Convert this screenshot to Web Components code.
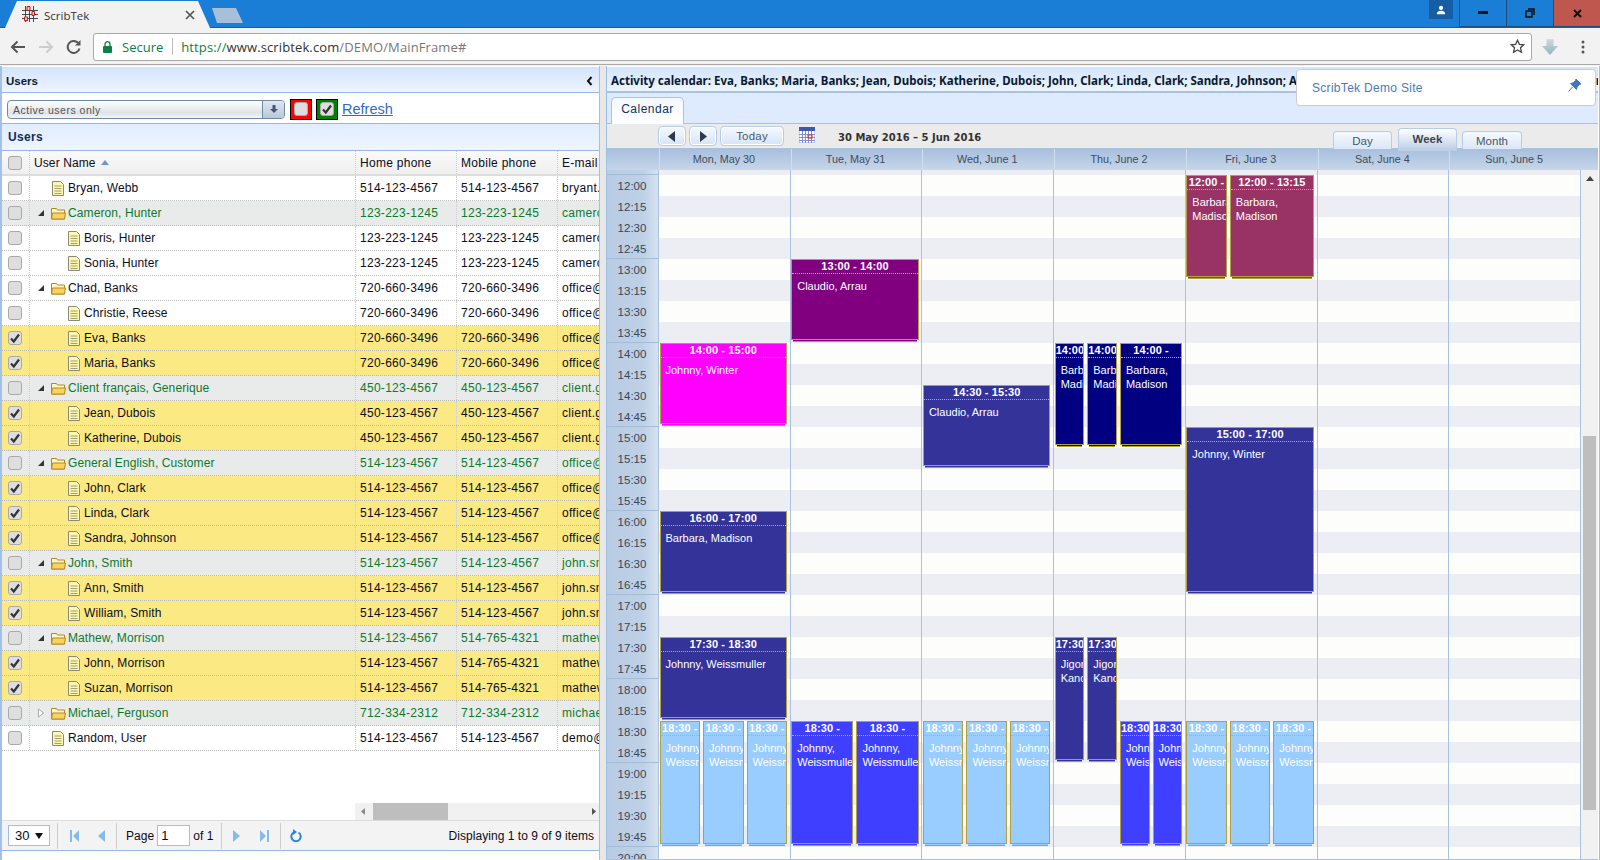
<!DOCTYPE html>
<html lang="en">
<head>
<meta charset="utf-8">
<title>ScribTek</title>
<style>
  html, body { margin: 0; height: 100%; overflow: hidden; background: #fff; }
  body { font: 12px "Liberation Sans", Arial, sans-serif; display: flex; flex-direction: column; height: 860px; }
</style>
</head>
<body>
  <browser-chrome></browser-chrome>
  <main-view>
    <users-panel></users-panel>
    <calendar-panel></calendar-panel>
  </main-view>
  <site-popup>ScribTek Demo Site</site-popup>

<script>
// Small base class: open shadow root, render on connect
class Base extends HTMLElement {
  constructor() {
    super();
    this.attachShadow({ mode: 'open' });
  }
  connectedCallback() {
    this.render();
  }
}

// Browser tab strip and address bar
class BrowserChrome extends Base {
  render() {
    this.shadowRoot.innerHTML = `
      <style>
        :host { display: block; height: 66px; flex: none; background: #f2f2f2; }
        .top { height: 28px; background: #1a7ed6; display: flex; align-items: flex-start; box-sizing: border-box; border-bottom: 1px solid #14609f; }
        .tab { width: 206px; height: 28px; margin-left: 5px; flex: none; background: #f2f2f2; display: flex; align-items: center;
               clip-path: polygon(0 100%, 12px 4%, 193px 4%, 205px 100%); font: 11.5px "Open Sans", sans-serif; color: #333; box-sizing: border-box; padding: 2px 0 0 17px; }
        .tab svg.fav { margin-right: 6px; margin-top: -2px; }
        .tab .x { margin-left: auto; margin-right: 16px; }
        .tab2 { width: 32px; height: 15px; margin: 8px 0 0 1px; background: #a7bfd8; clip-path: polygon(5px 100%, 0 0, 24px 0, 31px 100%); }
        .win { margin-left: auto; display: flex; }
        .user { width: 24px; height: 19px; background: #155ea3; margin-right: 6px; display: flex; align-items: center; justify-content: center; }
        .btn { width: 47px; height: 27px; box-sizing: border-box; border-left: 1px solid #1d4d7a; border-bottom: 1px solid #1d4d7a; display: flex; align-items: center; justify-content: center; }
        .close { background: #c0574f; }
        .bar { height: 37px; display: flex; align-items: center; box-sizing: border-box; padding: 1px 0 0 4px; border-bottom: 1px solid #a9a9a9; }
        .ico { width: 28px; display: flex; justify-content: center; }
        .omni { width: 1439px; height: 28px; margin-left: 5px; box-sizing: border-box; background: #fff; border: 1px solid #a9a9a9; border-radius: 3px;
                display: flex; align-items: center; font: 13px "Open Sans", sans-serif; color: #777; }
        .omni .lock { margin-left: 9px; }
        .sec { color: #0b8043; margin-left: 10px; }
        .div { width: 1px; height: 17px; background: #bbb; margin: 0 8px 0 9px; }
        .url { letter-spacing: .12px; }
        .url b { font-weight: 400; color: #333; }
        .url i { font-style: normal; color: #0b8043; }
        .star { margin-left: auto; margin-right: 6px; }
        .dl { margin-left: 10px; }
        .dots { margin-left: 23px; }
      </style>
      <div class="top">
        <div class="tab">
          <svg class="fav" width="16" height="16" viewBox="0 0 16 16">
            <path d="M0 4.5h16M0 8.5h16M0 12.5h16M3.500 0v16M7.500 0v16M11.500 0v16" stroke="#3f4a4a" fill="none"/>
            <path d="M5 .5h3v4H5zM10 5.500h2.500v4H10zM2.500 11h3v3.500h-3z" fill="#f7c9c9" stroke="#d8121a"/>
          </svg>
          ScribTek
          <svg class="x" width="10" height="10" viewBox="0 0 10 10"><path d="M1 1l8 8M9 1l-8 8" stroke="#555" stroke-width="1.700"/></svg>
        </div>
        <div class="tab2"></div>
        <div class="win">
          <div class="user"><svg width="10" height="10" viewBox="0 0 12 12"><circle cx="6" cy="3.500" r="2.500" fill="#fff"/><path d="M1 11c0-3 2-4 5-4s5 1 5 4z" fill="#fff"/></svg></div>
          <div class="btn"><svg width="10" height="4" viewBox="0 0 10 4"><rect width="10" height="3" fill="#111"/></svg></div>
          <div class="btn"><svg width="10" height="10" viewBox="0 0 10 10"><path d="M3 1h6v6M1 3h6v6H1z" fill="none" stroke="#111" stroke-width="1.500"/></svg></div>
          <div class="btn close"><svg width="9" height="9" viewBox="0 0 9 9"><path d="M1 1l7 7M8 1l-7 7" stroke="#111" stroke-width="2"/></svg></div>
        </div>
      </div>
      <div class="bar">
        <div class="ico"><svg width="16" height="14" viewBox="0 0 16 14"><path d="M15 7H2M7.500 1.500L2 7l5.500 5.500" fill="none" stroke="#555" stroke-width="2"/></svg></div>
        <div class="ico"><svg width="16" height="14" viewBox="0 0 16 14"><path d="M1 7h13M8.500 1.500L14 7l-5.500 5.500" fill="none" stroke="#ccc" stroke-width="2"/></svg></div>
        <div class="ico"><svg width="16" height="16" viewBox="0 0 16 16"><path d="M13.500 9.500A6 6 0 1 1 12 3.800" fill="none" stroke="#555" stroke-width="2"/><path d="M14.500 1v5.500H9z" fill="#555"/></svg></div>
        <div class="omni">
          <svg class="lock" width="9" height="12" viewBox="0 0 9 12"><path d="M2 5V3.200a2.500 2.500 0 0 1 5 0V5" fill="none" stroke="#0b8043" stroke-width="1.300"/><rect y="5" width="9" height="7" rx="1" fill="#0b8043"/></svg>
          <span class="sec">Secure</span><span class="div"></span>
          <span class="url"><i>https://</i><b>www.scribtek.com</b>/DEMO/MainFrame#</span>
          <svg class="star" width="15" height="15" viewBox="0 0 15 15"><path d="M7.500 1.300l1.900 4 4.300.5-3.200 3 .9 4.400-3.900-2.200-3.900 2.200.9-4.400-3.200-3 4.300-.5z" fill="none" stroke="#444" stroke-width="1.300"/></svg>
        </div>
        <svg class="dl" width="16" height="16" viewBox="0 0 16 16"><defs><linearGradient id="g" x1="0" y1="0" x2="0" y2="1"><stop offset="0" stop-color="#d5d9db"/><stop offset="1" stop-color="#8fb4bf"/></linearGradient></defs><path d="M4.500 0h7v7H16l-8 9-8-9h4.500z" fill="url(#g)"/></svg>
        <svg class="dots" width="4" height="14" viewBox="0 0 4 14"><circle cx="2" cy="2" r="1.500" fill="#555"/><circle cx="2" cy="7" r="1.500" fill="#555"/><circle cx="2" cy="12" r="1.500" fill="#555"/></svg>
      </div>`;
  }
}

// Row of panels under the browser bars
class MainView extends Base {
  render() {
    this.shadowRoot.innerHTML = `
      <style>
        :host { display: flex; flex: 1; min-height: 0; background: #e8e8e8; }
      </style>
      <slot></slot>`;
  }
}

// Grey rounded tick box used in grid rows
class CheckBox extends Base {
  render() {
    const tick = this.hasAttribute('checked')
      ? '<path d="M3 7.500l2.800 3L11 3.500" fill="none" stroke="#333" stroke-width="2.200"/>' : '';
    this.shadowRoot.innerHTML = `
      <style>:host { display: inline-flex; width: 14px; height: 14px; flex: none; }</style>
      <svg width="14" height="14" viewBox="0 0 14 14">
        <rect x=".5" y=".5" width="13" height="13" rx="2.500" fill="#dedede" stroke="#a9a9a9"/>${tick}
      </svg>`;
  }
}

// One row of the users tree grid
class UserRow extends Base {
  render() {
    const kind = this.getAttribute('kind') || 'leaf';
    const level = this.getAttribute('level') || '0';
    const checked = this.hasAttribute('checked');
    const group = kind !== 'leaf';
    const page = `<svg width="12" height="15" viewBox="0 0 12 15"><path d="M.5.500h8l3 3v11H.5z" fill="#fff7b0" stroke="#8a8a78"/><path d="M2.500 5h7M2.500 7.500h7M2.500 10h7M2.500 12.500h7" stroke="#a0a070"/></svg>`;
    const folder = `<svg width="15" height="13" viewBox="0 0 15 13"><path d="M.5 3V1.500h5l1 1.500h7v9H.5z" fill="#fff6c8" stroke="#b08a20"/><path d="M.5 12l1-6h13l-1 6z" fill="#fbd35c" stroke="#b08a20"/></svg>`;
    const open = `<svg width="6" height="6" viewBox="0 0 6 6"><path d="M6 0v6H0z" fill="#333"/></svg>`;
    const closed = `<svg width="6" height="10" viewBox="0 0 6 10"><path d="M.5 1l5 4-5 4z" fill="#fff" stroke="#aaa"/></svg>`;
    const tree = group
      ? `<span class="tri">${kind === 'open' ? open : closed}</span>${folder}`
      : page;
    const cls = group ? 'group' : (level === '1' ? 'child' : 'top');
    this.shadowRoot.innerHTML = `
      <style>
        :host { display: grid; grid-template-columns: 28px 326px 101px 101px 1fr; height: 25px; box-sizing: border-box;
                border-bottom: 1px dotted #bbb; color: #0c0c20; letter-spacing: .28px; }
        :host(.sel) { background: #fbe983; }
        :host(.grp) { background: #e9ebea; color: #0b7a2c; }
        .c { display: flex; align-items: center; border-right: 1px dotted #ccc; box-sizing: border-box; padding-left: 4px; overflow: hidden; white-space: nowrap; }
        .chk { padding-left: 6px; }
        .name { padding-left: 22px; letter-spacing: .1px; }
        .name.child { padding-left: 38px; }
        .name.group { padding-left: 8px; }
        .name svg { flex: none; }
        .name.top svg, .name.child svg { margin-right: 4px; }
        .tri { display: inline-flex; width: 6px; margin-right: 7px; }
        .name.group > svg { margin-right: 2px; }
        .last { border-right: 0; }
      </style>
      <div class="c chk"><check-box ${checked ? 'checked' : ''}></check-box></div>
      <div class="c name ${cls}">${tree}<span>${this.getAttribute('name')}</span></div>
      <div class="c">${this.getAttribute('home')}</div>
      <div class="c">${this.getAttribute('mobile')}</div>
      <div class="c last">${this.getAttribute('mail')}</div>`;
    if (checked) this.classList.add('sel');
    // Chad's group is not tinted in the grid
    if (group && !this.hasAttribute('plain')) this.classList.add('grp');
  }
}

const USERS = [
  ['Bryan, Webb', '514-123-4567', '514-123-4567', 'bryant.', 'leaf', 0, 0],
  ['Cameron, Hunter', '123-223-1245', '123-223-1245', 'cameron', 'open', 0, 0],
  ['Boris, Hunter', '123-223-1245', '123-223-1245', 'cameron', 'leaf', 1, 0],
  ['Sonia, Hunter', '123-223-1245', '123-223-1245', 'cameron', 'leaf', 1, 0],
  ['Chad, Banks', '720-660-3496', '720-660-3496', 'office@', 'open', 0, 0, 'plain'],
  ['Christie, Reese', '720-660-3496', '720-660-3496', 'office@', 'leaf', 1, 0],
  ['Eva, Banks', '720-660-3496', '720-660-3496', 'office@', 'leaf', 1, 1],
  ['Maria, Banks', '720-660-3496', '720-660-3496', 'office@', 'leaf', 1, 1],
  ['Client français, Generique', '450-123-4567', '450-123-4567', 'client.g', 'open', 0, 0],
  ['Jean, Dubois', '450-123-4567', '450-123-4567', 'client.g', 'leaf', 1, 1],
  ['Katherine, Dubois', '450-123-4567', '450-123-4567', 'client.g', 'leaf', 1, 1],
  ['General English, Customer', '514-123-4567', '514-123-4567', 'office@', 'open', 0, 0],
  ['John, Clark', '514-123-4567', '514-123-4567', 'office@', 'leaf', 1, 1],
  ['Linda, Clark', '514-123-4567', '514-123-4567', 'office@', 'leaf', 1, 1],
  ['Sandra, Johnson', '514-123-4567', '514-123-4567', 'office@', 'leaf', 1, 1],
  ['John, Smith', '514-123-4567', '514-123-4567', 'john.sm', 'open', 0, 0],
  ['Ann, Smith', '514-123-4567', '514-123-4567', 'john.sm', 'leaf', 1, 1],
  ['William, Smith', '514-123-4567', '514-123-4567', 'john.sm', 'leaf', 1, 1],
  ['Mathew, Morrison', '514-123-4567', '514-765-4321', 'mathew', 'open', 0, 0],
  ['John, Morrison', '514-123-4567', '514-765-4321', 'mathew', 'leaf', 1, 1],
  ['Suzan, Morrison', '514-123-4567', '514-765-4321', 'mathew', 'leaf', 1, 1],
  ['Michael, Ferguson', '712-334-2312', '712-334-2312', 'michael', 'closed', 0, 0],
  ['Random, User', '514-123-4567', '514-123-4567', 'demo@', 'leaf', 0, 0]
];

// Left side: users grid with its filter bar and pager
class UsersPanel extends Base {
  render() {
    const rows = USERS.map(u => `<user-row name="${u[0]}" home="${u[1]}" mobile="${u[2]}" mail="${u[3]}" kind="${u[4]}" level="${u[5]}" ${u[6] ? 'checked' : ''} ${u[7] || ''}></user-row>`).join('');
    this.shadowRoot.innerHTML = `
      <style>
        :host { display: flex; flex-direction: column; width: 600px; flex: none; box-sizing: border-box; background: #fff;
                border-left: 2px solid #a3c1e6; border-right: 1px solid #a3c1e6; padding-top: 1px; color: #0c0c20; }
        .head { height: 26px; flex: none; box-sizing: border-box; border-bottom: 1px solid #95b8e7; display: flex; align-items: center; justify-content: space-between;
                padding: 2px 6px 0 4px; background: linear-gradient(#d3e4fb, #edf5ff); font-weight: 700; font-size: 11.5px; color: #0a1a30; }
        .tools { height: 31px; flex: none; box-sizing: border-box; border-bottom: 1px solid #95b8e7; display: flex; align-items: center; padding: 2px 0 0 5px; }
        .combo { width: 278px; height: 19px; box-sizing: border-box; border: 1px solid #6d8aa5; border-radius: 4px; display: flex; font-size: 10.5px; letter-spacing: .5px; color: #555;
                 background: linear-gradient(#fff, #dfe3e7 70%, #f5f6f7); }
        .combo span { flex: 1; padding: 3px 0 0 5px; }
        .combo i { width: 21px; border-left: 1px solid #6d8aa5; display: flex; align-items: center; justify-content: center; background: linear-gradient(#dfe7ef, #b9c8d8); border-radius: 0 3px 3px 0; }
        .flag { width: 22px; height: 21px; box-sizing: border-box; border: 1px solid #000; display: flex; align-items: center; justify-content: center; margin-left: 5px; }
        .flag.r { background: #f00; }
        .flag.g { background: #008000; margin-left: 4px; }
        a { color: #3468c8; font-size: 14.5px; margin-left: 4px; text-decoration: underline; letter-spacing: 0; }
        .title { height: 27px; flex: none; box-sizing: border-box; border-bottom: 1px solid #95b8e7; display: flex; align-items: center; padding-left: 6px;
                 background: linear-gradient(#e0ecff, #eff5ff); font-weight: 700; font-size: 12px; letter-spacing: .3px; color: #0e2d5f; }
        .cols { height: 25px; flex: none; box-sizing: border-box; display: grid; grid-template-columns: 28px 326px 101px 101px 1fr; background: linear-gradient(#fafafa, #efefef); border-bottom: 2px solid #ddd; letter-spacing: .28px; }
        .cols div { display: flex; align-items: center; padding-left: 4px; border-right: 1px dotted #ccc; box-sizing: border-box; }
        .cols .chk { padding-left: 6px; }
        .cols .nm { letter-spacing: .1px; }
        .cols div:last-child { border-right: 0; }
        .sort { margin-left: 5px; }
        .body { flex: 1; min-height: 0; display: flex; flex-direction: column; overflow: hidden; }
        .hbar { margin: auto 0 0 353px; height: 17px; flex: none; background: #f1f1f1; display: flex; align-items: center; }
        .hbar .thumb { width: 75px; height: 17px; background: #bebebe; margin-left: 18px; }
        .hbar svg { flex: none; }
        .hbar svg.l { margin-left: 6px; margin-right: -10px; }
        .hbar svg.r { margin-left: auto; margin-right: 3px; }
        .pager { height: 31px; flex: none; box-sizing: border-box; border-top: 1px solid #ddd; border-bottom: 1px solid #95b8e7; background: #f3f3f3; display: flex; align-items: center; padding-left: 6px; letter-spacing: .05px; }
        .size { width: 42px; height: 21px; box-sizing: border-box; background: #fff; border: 1px solid #9ec0e8; display: flex; align-items: center; justify-content: space-between; padding: 0 6px; font-size: 13px; }
        .sep { width: 1px; height: 26px; background: #ccc; }
        .pager svg { flex: none; }
        .num { width: 33px; height: 21px; box-sizing: border-box; background: #fff; border: 1px solid #9ec0e8; padding: 2px 0 0 3px; font-size: 13px; margin: 0 3px; }
        .disp { margin-left: auto; margin-right: 5px; }
        .foot { height: 9px; flex: none; }
      </style>
      <div class="head"><span>Users</span><svg width="7" height="10" viewBox="0 0 7 10"><path d="M5.500 1L2 5l3.500 4" fill="none" stroke="#111" stroke-width="2"/></svg></div>
      <div class="tools">
        <div class="combo"><span>Active users only</span><i><svg width="10" height="10" viewBox="0 0 10 10"><path d="M3.500 1h3v4H9L5 9 1 5h2.500z" fill="#3c5a78"/></svg></i></div>
        <div class="flag r"><check-box></check-box></div>
        <div class="flag g"><check-box checked></check-box></div>
        <a href="#">Refresh</a>
      </div>
      <div class="title">Users</div>
      <div class="cols">
        <div class="chk"><check-box></check-box></div>
        <div class="nm">User Name<svg class="sort" width="8" height="5" viewBox="0 0 8 5"><path d="M4 0l4 5H0z" fill="#6d97d0"/></svg></div>
        <div>Home phone</div><div>Mobile phone</div><div>E-mail</div>
      </div>
      <div class="body">
        ${rows}
        <div class="hbar">
          <svg class="l" width="4" height="7" viewBox="0 0 4 7"><path d="M4 0v7L0 3.500z" fill="#888"/></svg>
          <div class="thumb"></div>
          <svg class="r" width="4" height="7" viewBox="0 0 4 7"><path d="M0 0v7l4-3.500z" fill="#555"/></svg>
        </div>
      </div>
      <div class="pager">
        <div class="size">30<svg width="8" height="6" viewBox="0 0 8 6"><path d="M0 0h8L4 6z" fill="#111"/></svg></div>
        <span class="sep" style="margin-left:7px"></span>
        <svg style="margin-left:12px" width="9" height="12" viewBox="0 0 9 12"><path d="M0 0h2v12H0zM9 0v12L3 6z" fill="#84bce9"/></svg>
        <svg style="margin-left:19px" width="7" height="12" viewBox="0 0 7 12"><path d="M7 0v12L0 6z" fill="#84bce9"/></svg>
        <span class="sep" style="margin-left:11px"></span>
        <span style="margin-left:9px">Page</span><span class="num">1</span><span>of 1</span>
        <span class="sep" style="margin-left:8px"></span>
        <svg style="margin-left:11px" width="7" height="12" viewBox="0 0 7 12"><path d="M0 0v12l7-6z" fill="#84bce9"/></svg>
        <svg style="margin-left:20px" width="9" height="12" viewBox="0 0 9 12"><path d="M0 0v12l6-6zM7 0h2v12H7z" fill="#84bce9"/></svg>
        <span class="sep" style="margin-left:11px"></span>
        <svg style="margin-left:9px" width="12" height="14" viewBox="0 0 12 14"><path d="M8.500 3.500A4.700 4.700 0 1 1 3.500 3.500" fill="none" stroke="#2b86d6" stroke-width="2"/><path d="M3 0v6l4-3z" fill="#2b86d6"/></svg>
        <span class="disp">Displaying 1 to 9 of 9 items</span>
      </div>
      <div class="foot"></div>`;
  }
}

// Appointment block placed on the day column by its hour and lane
class CalEvent extends Base {
  render() {
    const start = parseFloat(this.getAttribute('start'));
    const dur = parseFloat(this.getAttribute('dur'));
    const lanes = parseInt(this.getAttribute('lanes') || '1');
    const lane = parseInt(this.getAttribute('lane') || '0');
    const span = parseInt(this.getAttribute('span') || '1');
    const gap = 3, total = 127.5;
    const w = (total - gap * (lanes - 1)) / lanes;
    const color = this.getAttribute('color');
    this.style.top = (5 + (start - 12) * 84) + 'px';
    this.style.left = (0.5 + lane * (w + gap)) + 'px';
    this.style.width = (w * span + gap * (span - 1)) + 'px';
    this.style.height = (dur * 84 - 3) + 'px';
    this.shadowRoot.innerHTML = `
      <style>
        :host { position: absolute; display: block; }
        .box { position: relative; height: 100%; box-sizing: border-box; background: ${color}; border: 1.500px solid #b5a040; color: #fff; overflow: hidden; }
        .time { height: 13px; overflow: hidden; border-bottom: 1px dotted #c9b24a; text-align: center; font-weight: 700; font-size: 11px; line-height: 13px; letter-spacing: .1px; }
        .who { padding: 6px 4px 0 5px; font-size: 11px; line-height: 13.500px; overflow: hidden; }
        .strip { position: absolute; left: 2px; right: 2px; bottom: -2px; height: 2px; box-sizing: border-box; background: ${color}; border-bottom: 1px solid #b5a040; }
      </style>
      <div class="box"><div class="time">${this.getAttribute('time')}</div><div class="who"><slot></slot></div></div>
      <div class="strip"></div>`;
  }
}

// One day column; events are slotted in
class CalDay extends Base {
  render() {
    this.shadowRoot.innerHTML = `
      <style>
        :host { display: block; position: relative; border-right: 1px solid #a9c3dc; min-width: 0; }
      </style>
      <slot></slot>`;
  }
}

// Hours on the left of the calendar body
class CalGutter extends Base {
  render() {
    let cells = '';
    for (let h = 12; h <= 20; h++) {
      for (const m of ['00', '15', '30', '45']) {
        cells += `<div class="t${m === '00' ? ' hr' : ''}">${h}:${m}</div>`;
      }
    }
    this.shadowRoot.innerHTML = `
      <style>
        :host { display: block; overflow: hidden; padding-top: 5px; box-sizing: border-box; background: linear-gradient(90deg, #b9cce3 0, #bed0e6 70%, #d6e2f0 100%); border-right: 1px solid #a9c3dc; font-size: 11.5px; color: #3a4656; }
        .t { height: 21px; line-height: 23px; text-align: center; padding-right: 1px; }
        .hr { border-top: 1px solid #a3bcd8; margin-top: -1px; }
      </style>
      ${cells}`;
  }
}

// Week view with toolbar, day header, hours and events
class WeekCalendar extends Base {
  render() {
    const days = ['Mon, May 30', 'Tue, May 31', 'Wed, June 1', 'Thu, June 2', 'Fri, June 3', 'Sat, June 4', 'Sun, June 5'];
    this.shadowRoot.innerHTML = `
      <style>
        :host { display: flex; flex-direction: column; flex: 1; min-height: 0; color: #3a4656; }
        .bar { height: 25px; flex: none; box-sizing: border-box; background: #ebebeb; border-bottom: 1px solid #a9c3dc; display: flex; padding-left: 51px; align-items: flex-start; }
        .b { height: 20px; margin-top: 2px; box-sizing: border-box; border: 1px solid #b6cde8; border-radius: 4px; background: linear-gradient(#f5f9fe, #d6e4f7); display: flex; align-items: center; justify-content: center; margin-right: 3px; width: 28px; font-size: 11.5px; color: #4c5a6c; box-shadow: inset 0 0 0 1px #fff; }
        .b.today { width: 64px; letter-spacing: .2px; }
        .cal { margin: 3px 0 0 12px; flex: none; }
        .range { font: 700 10px "DejaVu Sans", sans-serif; margin: 8px 0 0 23px; color: #333; }
        .tabs { margin-left: auto; margin-right: 76px; display: flex; align-items: flex-end; height: 26px; }
        .tab { width: 59px; height: 19px; box-sizing: border-box; border: 1px solid #b6cde8; border-bottom: 0; border-radius: 4px 4px 0 0; background: linear-gradient(#f5f9fe, #d9e6f6); margin-right: 5px; text-align: center; font-size: 11.5px; line-height: 19px; color: #4a5666; }
        .tab.on { height: 23px; background: linear-gradient(#fff, #b9cde4); font-weight: 700; color: #3a4454; line-height: 20px; margin-bottom: -1px; position: relative; margin-right: 5px; margin-left: 1px; }
        .tab:last-child { margin-right: 0; width: 60px; }
        .days { height: 21px; flex: none; display: grid; grid-template-columns: 52px repeat(7, 1fr) 17px; background: linear-gradient(#a8bfdd, #c6d6ea); }
        .days div { display: flex; align-items: center; justify-content: center; font-size: 10.8px; color: #3f4b5c; border-left: 1px solid #d0deee; padding: 0 3px 2px 0; }
        .days div:first-child, .days div:last-child { border-left: 0; }
        .main { flex: 1; min-height: 0; display: grid; grid-template-columns: 52px 922px 17px; border-bottom: 1px solid #a9c3dc; }
        .grid { display: grid; grid-template-columns: repeat(7, 1fr); overflow: hidden; background: repeating-linear-gradient(#edeef3 0 5px, #fdfefb 5px 26px, #edeef3 26px 42px); }
        .vbar { background: #f1f1f1; display: flex; flex-direction: column; align-items: center; }
        .vbar svg { margin-top: 6px; }
        .vbar .thumb { width: 13px; height: 374px; background: #bebebe; margin-top: 255px; }
      </style>
      <div class="bar">
        <div class="b"><svg width="8" height="11" viewBox="0 0 8 11"><path d="M7 0v11L0 5.500z" fill="#2c3a4c"/></svg></div>
        <div class="b"><svg width="8" height="11" viewBox="0 0 8 11"><path d="M1 0v11l7-5.500z" fill="#2c3a4c"/></svg></div>
        <div class="b today">Today</div>
        <svg class="cal" width="16" height="16" viewBox="0 0 16 16">
          <rect y="1" width="16" height="15" fill="#fff" stroke="#5566aa" stroke-width=".6"/><rect width="16" height="4" fill="#3c5aa8"/>
          <path d="M0 7.500h16M0 10.500h16M0 13.500h16M3.500 4v12M6.500 4v12M9.500 4v12M12.500 4v12" stroke="#7e92cf"/>
          <rect x="9" y="8" width="4" height="3" fill="none" stroke="#e03020"/>
        </svg>
        <div class="range">30 May 2016 – 5 Jun 2016</div>
        <div class="tabs"><div class="tab">Day</div><div class="tab on">Week</div><div class="tab">Month</div></div>
      </div>
      <div class="days"><div></div>${days.map(d => `<div>${d}</div>`).join('')}<div></div></div>
      <div class="main">
        <cal-gutter></cal-gutter>
        <div class="grid"><slot></slot></div>
        <div class="vbar">
          <svg width="8" height="5" viewBox="0 0 8 5"><path d="M4 0l4 5H0z" fill="#444"/></svg>
          <div class="thumb"></div>
        </div>
      </div>`;
  }
}

// Right side: panel title, tab strip and the calendar
class CalendarPanel extends Base {
  render() {
    const names = USERS.filter(u => u[6]).map(u => u[0]).join('; ');
    const ev = (start, dur, color, who, time, extra = '') =>
      `<cal-event start="${start}" dur="${dur}" color="${color}" time="${time}" ${extra}>${who}</cal-event>`;
    const BLUE = '#333399', NAVY = '#000080', LIGHT = '#99ccff', BRIGHT = '#3f3fff', WINE = '#993366';
    const lw = 'Johnny, Weissmuller';
    const lanes3 = (c) => [0, 1, 2].map(l => ev(18.5, 1.5, c, lw, '18:30 - 20:00', `lanes="3" lane="${l}"`)).join('');
    this.shadowRoot.innerHTML = `
      <style>
        :host { display: flex; flex-direction: column; flex: 1; min-width: 0; margin-left: 6px; box-sizing: border-box; background: #fff;
                border-left: 1px solid #9cbfe4; border-right: 1px solid #9cbfe4; padding-right: 1px; padding-top: 1px; }
        .head { height: 26px; flex: none; box-sizing: border-box; border-bottom: 2px solid #a8c2e0; display: flex; align-items: center; padding: 2px 0 0 4px;
                background: linear-gradient(#d3e4fb, #edf5ff); white-space: nowrap; overflow: hidden; font: 700 11.5px "Noto Sans", sans-serif; color: #0a1a30; }
        .strip { height: 31px; flex: none; box-sizing: border-box; background: #deeafd; border-bottom: 1px solid #a9c3dc; display: flex; align-items: flex-end; padding-left: 4px; }
        .tab { width: 73px; height: 27px; margin-bottom: -1px; box-sizing: border-box; border: 1px solid #a9c3e6; border-bottom: 0; border-radius: 5px 5px 0 0; background: linear-gradient(#f3f8ff, #fff); text-align: center; line-height: 22px; font-size: 12px; letter-spacing: .5px; color: #11335c; }
      </style>
      <div class="head">Activity calendar: ${names}</div>
      <div class="strip"><div class="tab">Calendar</div></div>
      <week-calendar>
        <cal-day>
          ${ev(14, 1, '#ff00ff', 'Johnny, Winter', '14:00 - 15:00')}
          ${ev(16, 1, BLUE, 'Barbara, Madison', '16:00 - 17:00')}
          ${ev(17.5, 1, BLUE, lw, '17:30 - 18:30')}
          ${lanes3(LIGHT)}
        </cal-day>
        <cal-day>
          ${ev(13, 1, '#800080', 'Claudio, Arrau', '13:00 - 14:00')}
          ${ev(18.5, 1.5, BRIGHT, lw, '18:30 - 20:00', 'lanes="2" lane="0"')}
          ${ev(18.5, 1.5, BRIGHT, lw, '18:30 - 20:00', 'lanes="2" lane="1"')}
        </cal-day>
        <cal-day>
          ${ev(14.5, 1, BLUE, 'Claudio, Arrau', '14:30 - 15:30')}
          ${lanes3(LIGHT)}
        </cal-day>
        <cal-day>
          ${ev(14, 1.25, NAVY, 'Barbara, Madison', '14:00 - 15:15', 'lanes="4" lane="0"')}
          ${ev(14, 1.25, NAVY, 'Barbara, Madison', '14:00 - 15:15', 'lanes="4" lane="1"')}
          ${ev(14, 1.25, NAVY, 'Barbara, Madison', '14:00 - 15:15', 'lanes="4" lane="2" span="2"')}
          ${ev(17.5, 1.5, BLUE, 'Jigor, Kano', '17:30 - 19:00', 'lanes="4" lane="0"')}
          ${ev(17.5, 1.5, BLUE, 'Jigor, Kano', '17:30 - 19:00', 'lanes="4" lane="1"')}
          ${ev(18.5, 1.5, BRIGHT, lw, '18:30 - 20:00', 'lanes="4" lane="2"')}
          ${ev(18.5, 1.5, BRIGHT, lw, '18:30 - 20:00', 'lanes="4" lane="3"')}
        </cal-day>
        <cal-day>
          ${ev(12, 1.25, WINE, 'Barbara, Madison', '12:00 - 13:15', 'lanes="3" lane="0"')}
          ${ev(12, 1.25, WINE, 'Barbara, Madison', '12:00 - 13:15', 'lanes="3" lane="1" span="2"')}
          ${ev(15, 2, BLUE, 'Johnny, Winter', '15:00 - 17:00')}
          ${lanes3(LIGHT)}
        </cal-day>
        <cal-day></cal-day>
        <cal-day></cal-day>
      </week-calendar>`;
  }
}

// Floating note over the top right corner
class SitePopup extends Base {
  render() {
    this.shadowRoot.innerHTML = `
      <style>
        :host { position: absolute; top: 69px; left: 1296px; width: 300px; height: 37px; box-sizing: border-box; background: #fff; border: 1px solid #ccc; border-radius: 4px;
                display: flex; align-items: center; padding: 0 14px 0 15px; font-size: 12px; letter-spacing: .3px; color: #4a7ab5; }
        svg { margin-left: auto; margin-top: -4px; }
      </style>
      <slot></slot>
      <svg width="13" height="13" viewBox="0 0 13 13"><path d="M8 0l5 5-1.500.5L9 8l-.5 2.500-6-6L5 4l2.500-2.500zM4.500 8L.5 12.500" fill="#3f78c0" stroke="#3f78c0"/></svg>`;
  }
}

customElements.define('browser-chrome', BrowserChrome);
customElements.define('main-view', MainView);
customElements.define('check-box', CheckBox);
customElements.define('user-row', UserRow);
customElements.define('users-panel', UsersPanel);
customElements.define('cal-event', CalEvent);
customElements.define('cal-day', CalDay);
customElements.define('cal-gutter', CalGutter);
customElements.define('week-calendar', WeekCalendar);
customElements.define('calendar-panel', CalendarPanel);
customElements.define('site-popup', SitePopup);
</script>
</body>
</html>
